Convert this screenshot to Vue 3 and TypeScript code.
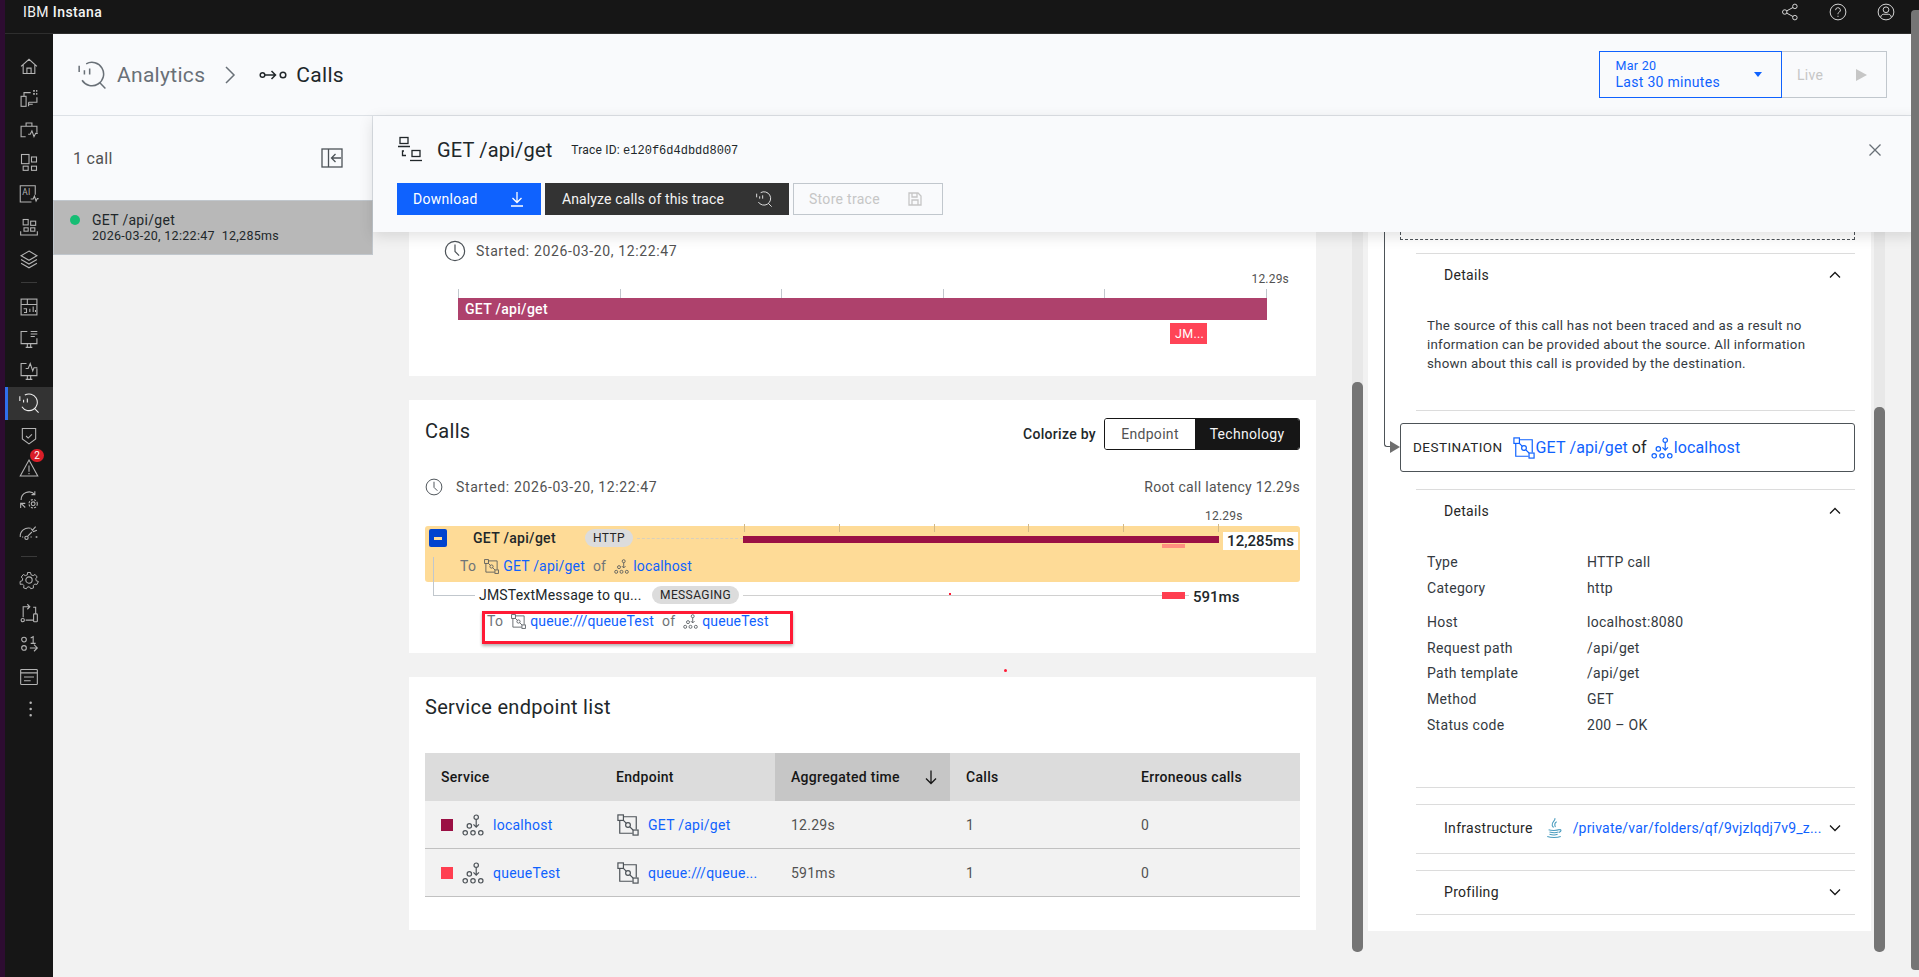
<script setup lang="ts">
interface NavItem { icon: string; badge?: string; active?: boolean }
const navGroups: NavItem[][] = [
  [{ icon: 'home' }, { icon: 'infra' }, { icon: 'case' }, { icon: 'apps' }, { icon: 'ai' }, { icon: 'plat' }, { icon: 'layers' }],
  [{ icon: 'dash' }, { icon: 'mon1' }, { icon: 'mon2' }, { icon: 'analytics', active: true }, { icon: 'shield' }, { icon: 'alert', badge: '2' }, { icon: 'auto' }, { icon: 'gauge' }],
  [{ icon: 'gear' }, { icon: 'flow' }, { icon: 'binary' }, { icon: 'news' }, { icon: 'dots' }],
]
const kvGroups = [
  [['Type', 'HTTP call'], ['Category', 'http']],
  [['Host', 'localhost:8080'], ['Request path', '/api/get'], ['Path template', '/api/get'], ['Method', 'GET'], ['Status code', '200 – OK']],
]
const tableRows = [
  { color: '#9b1044', service: 'localhost', endpoint: 'GET /api/get', time: '12.29s', calls: '1', errors: '0' },
  { color: '#ff3e50', service: 'queueTest', endpoint: 'queue:///queue...', time: '591ms', calls: '1', errors: '0' },
]
const columnHeads = ['Service', 'Endpoint', 'Aggregated time', 'Calls', 'Erroneous calls']
</script>

<template>
  <div class="app">
    <svg class="sprite" width="0" height="0" aria-hidden="true">
      <defs>
        <symbol id="home" viewBox="0 0 24 24"><path d="M2.5 12.5 12 4l9.5 8.5M5 10.5V21h14V10.5M9.5 21v-6.5h5V21" /></symbol>
        <symbol id="infra" viewBox="0 0 24 24"><rect x="2.5" y="10" width="6" height="12" /><path d="M6 10V5.5h8M21.5 11v6H11.5M11.5 22v-5M11.5 19.5h5" /><path class="dotted" d="M17 3.5h5M17 7h5" /></symbol>
        <symbol id="case" viewBox="0 0 24 24"><path d="M8 20H2.5V7.5h19V15M8.5 7.5V3.5h7v4M11 17l2.5 0 2-4 2.5 7 2-4 2.500 0" /></symbol>
        <symbol id="apps" viewBox="0 0 24 24"><rect x="3" y="3" width="9" height="11" /><rect x="15" y="6" width="6" height="6" /><rect x="5" y="17" width="6" height="5" /><rect x="15" y="17" width="6" height="5" /></symbol>
        <symbol id="ai" viewBox="0 0 24 24"><path d="M15 21.5H1.5V2h18v11" /><text x="4" y="13.5" class="svgtxt">AI</text><path d="M14 18h3l1.5-3.5 2 6 1.5-3h1.500" /></symbol>
        <symbol id="plat" viewBox="0 0 24 24"><rect x="5" y="3" width="6" height="6.5" /><rect x="14" y="5" width="6" height="5" /><rect x="6" y="13" width="5" height="4" /><rect x="14" y="13" width="5" height="4" /><path d="M2 17v4.5h20V17" /></symbol>
        <symbol id="layers" viewBox="0 0 24 24"><path d="M12 2.5 21.5 8 12 13.5 2.5 8zM2.5 12.5 12 18l9.5-5.5M2.5 17 12 22.5l9.5-5.5" /></symbol>
        <symbol id="dash" viewBox="0 0 24 24"><rect x="2.5" y="2.5" width="19" height="19" /><path d="M2.5 9h19M10 2.5V9M6 18.5h3v-4.5H5.5M13 18v-4M17 18v-6.5M19.8 18v-2.5" /></symbol>
        <symbol id="mon1" viewBox="0 0 24 24"><path d="M10 3H2.5v14.5h19V11M8 22h8M10 18v4M14 18v4M14 3h8M14 6h8M14 9h5" /></symbol>
        <symbol id="mon2" viewBox="0 0 24 24"><path d="M9 3H2.5v14.5h19V9M8 22h8M10 18v4M14 18v4M8 9h3l2.5-6 3 9 1.5-4 4 0" /></symbol>
        <symbol id="analytics" viewBox="0 0 24 24"><path d="M7 2.5A10 10 0 1 1 3.5 16.5M18.500 18.500 23.500 23.500M1 4v5.500M5.500 8v3.500M10 6.500v5" /></symbol>
        <symbol id="shield" viewBox="0 0 24 24"><path d="M4 3h16v12.5l-8 6-8-6zM8.5 12l2.5 2.500 4.500-4.500" /></symbol>
        <symbol id="alert" viewBox="0 0 24 24"><path d="M12 2.5 22.5 21.5h-21zM12 9v7.500M12 18v1.500" /></symbol>
        <symbol id="auto" viewBox="0 0 24 24"><path d="M2.5 12A9.500 9.500 0 0 1 19 5.500M19 1.500v4h-4M2 21.500V16h5.500M2.500 16l5 5" /><circle cx="17" cy="16.5" r="2.3" /><circle cx="17" cy="16.5" r="5" stroke-dasharray="2.5 1.5" /></symbol>
        <symbol id="gauge" viewBox="0 0 24 24"><path d="M1.5 18A10 10 0 0 1 14 7.500M10.500 17l5-5M16 10l4-4.500M14.500 8l3 3.500 4-1.500" /><circle cx="9" cy="19" r="2" /><path class="dotted" d="M4 18h1M14 18h1M20 18h2" /></symbol>
        <symbol id="gear" viewBox="0 0 24 24"><path d="M10 2h4l.7 3 2.800 1.200 2.600-1.600 2.800 3.400-1.900 2.300.6 2.700 2.900 1v.1l-1.900 3.800-3 -.5-1.900 2.100.4 3-3.700 1.200-1.700-2.500h-2.500l-1.700 2.500-3.700-1.200.4-3-1.900-2.100-3 .5L.1 14l2.900-1 .6-2.700L1.700 8l2.800-3.400 2.600 1.600L9.900 5z" transform="translate(1.2 1.2) scale(.9)" /><circle cx="12" cy="12" r="3.8" /></symbol>
        <symbol id="flow" viewBox="0 0 24 24"><path d="M5 17V4.500h8M10 1.500l3 3-3 3M17 5h3v8M8 20.500h9" /><circle cx="4.5" cy="20.5" r="2" /><rect x="17.5" y="13" width="4.5" height="9.5" rx="1" /></symbol>
        <symbol id="binary" viewBox="0 0 24 24"><circle cx="6" cy="5.5" r="2.8" /><circle cx="6" cy="15.5" r="2.8" /><path d="M14 3.500l3-1.500v8M14 10h6M13 15.500h9M18 11.500l4 4-4 4" /></symbol>
        <symbol id="news" viewBox="0 0 24 24"><rect x="2" y="3" width="20" height="18" rx="1" /><path d="M2 7h20M6 12h12M6 16.500h8" /></symbol>
        <symbol id="dots" viewBox="0 0 24 24"><path class="solid" d="M15.500 4.500a1.500 1.500 0 1 1-3 0 1.500 1.500 0 0 1 3 0zM15.500 12a1.500 1.500 0 1 1-3 0 1.500 1.500 0 0 1 3 0zM15.500 19.500a1.500 1.500 0 1 1-3 0 1.500 1.500 0 0 1 3 0z" /></symbol>
        <symbol id="share" viewBox="0 0 24 24"><circle cx="5" cy="12" r="3" /><circle cx="18.5" cy="4.5" r="3" /><circle cx="18.5" cy="19.5" r="3" /><path d="M7.600 10.500 16 6M7.600 13.500 16 18" /></symbol>
        <symbol id="help" viewBox="0 0 24 24"><circle cx="12" cy="12" r="10.5" /><path d="M8.800 9.500A3.200 3.200 0 1 1 13.500 12.300c-1 .6-1.500 1.100-1.500 2.700M12 17v1.500" /></symbol>
        <symbol id="user" viewBox="0 0 24 24"><circle cx="12" cy="12" r="10.5" /><circle cx="12" cy="9" r="3.8" /><path d="M5 19c0-3 2.500-4 4-4h6c1.500 0 4 1 4 4" /></symbol>
        <symbol id="calls" viewBox="0 0 28 12"><circle cx="3.5" cy="6" r="2.3" /><circle cx="24" cy="6" r="2.8" /><path d="M6 6h10M12.500 2l4 4-4 4" /></symbol>
        <symbol id="panel" viewBox="0 0 24 24"><rect x="2" y="3" width="20" height="18" /><path d="M8.500 3v18M21 12H11.500M15.500 8l-4 4 4 4" /></symbol>
        <symbol id="trace" viewBox="0 0 28 28"><rect x="3" y="1.5" width="8" height="6" /><path d="M1 10.500h12M7 15h-1.500v4.500H9" /><rect x="15" y="14.5" width="8" height="6" /><path d="M13 24.500h12" /></symbol>
        <symbol id="download" viewBox="0 0 16 16"><path d="M8 1v10M3.500 7 8 11.500 12.500 7M2 15h12" /></symbol>
        <symbol id="save" viewBox="0 0 16 16"><path d="M2 2h9l3 3v9H2zM5 2v4h5V2M5 14V9h6v5" /></symbol>
        <symbol id="close" viewBox="0 0 16 16"><path d="M2.500 2.500l11 11M13.500 2.500l-11 11" /></symbol>
        <symbol id="clock" viewBox="0 0 24 24"><circle cx="12" cy="12" r="10.5" /><path d="M12 5v7.500l4.500 4.500" /></symbol>
        <symbol id="endpoint" viewBox="0 0 24 24"><rect x="1" y="1" width="6" height="6" /><rect x="17.5" y="17.5" width="5.5" height="5.5" /><path d="M7 3h14v14M3 7v14h14M7 7l3.200 3.200M14 14l3.500 3.500" /><circle cx="12" cy="12" r="2.6" /></symbol>
        <symbol id="service" viewBox="0 0 24 24"><circle cx="15.5" cy="3.5" r="2.4" /><path d="M15.500 6v8M12.500 11.300l3 3 3-3" /><circle cx="8" cy="13" r="2.4" /><circle cx="3.5" cy="20.5" r="2.4" /><circle cx="12" cy="20.5" r="2.4" /><circle cx="20.5" cy="20.5" r="2.4" /></symbol>
        <symbol id="up" viewBox="0 0 16 16"><path d="M3 10.500 8 5.500l5 5" /></symbol>
        <symbol id="down" viewBox="0 0 16 16"><path d="M3 5.500l5 5 5-5" /></symbol>
        <symbol id="sort" viewBox="0 0 16 16"><path d="M8 1.500v13M3 9.500l5 5 5-5" /></symbol>
        <symbol id="java" viewBox="0 0 20 24"><path d="M11 1c1 3-4 4.500-3 8 .3 1 1 1.500 1.500 2.500M13 5c-3 1.500-2.500 3.500-1.500 6M4 14c3 1 9 1 12-.3M5 16.500c3 .8 8 .8 10-.2M5 19c3 .8 7 .8 9 0M2.500 21.500c4 1.500 11 1.500 15 0M16 14c2-1 3 1.500-.5 3" /></symbol>
      </defs>
    </svg>

    <div class="strip"></div>
    <div class="shell">
      <header class="topbar">
        <span class="brand">IBM <b>Instana</b></span>
        <div class="topicons">
          <svg class="ti"><use href="#share" /></svg>
          <svg class="ti"><use href="#help" /></svg>
          <svg class="ti"><use href="#user" /></svg>
        </div>
      </header>
      <div class="body">
        <nav class="sidenav">
          <template v-for="(group, g) in navGroups" :key="g">
            <div v-if="g > 0" class="navsep"></div>
            <div v-for="item in group" :key="item.icon" class="navitem" :class="{ active: item.active }">
              <svg class="navicon"><use :href="'#' + item.icon" /></svg>
              <span v-if="item.badge" class="badge">{{ item.badge }}</span>
            </div>
          </template>
        </nav>
        <div class="workspace">
          <div class="pagehead">
            <svg class="crumb-icon"><use href="#analytics" /></svg>
            <span class="crumb">Analytics</span>
            <svg class="crumb-sep" viewBox="0 0 12 20"><path d="M2 2l8 8-8 8" /></svg>
            <svg class="calls-icon"><use href="#calls" /></svg>
            <span class="crumb current">Calls</span>
            <div class="timepick">
              <div class="range">
                <div class="range-text"><div class="range-small">Mar 20</div><div>Last 30 minutes</div></div>
                <span class="caret"></span>
              </div>
              <div class="live"><span>Live</span><span class="play"></span></div>
            </div>
          </div>
          <div class="split">
            <aside class="list">
              <div class="listhead">
                <span>1 call</span>
                <svg class="panel-icon"><use href="#panel" /></svg>
              </div>
              <div class="listrow">
                <span class="dot"></span>
                <div><div class="l1">GET /api/get</div><div class="l2">2026-03-20, 12:22:47&nbsp; 12,285ms</div></div>
              </div>
            </aside>
            <section class="detail">
              <div class="dhead">
                <div class="dtitle">
                  <svg class="trace-icon"><use href="#trace" /></svg>
                  <h1>GET /api/get</h1>
                  <span class="traceid">Trace ID: <span class="mono">e120f6d4dbdd8007</span></span>
                  <svg class="close-icon"><use href="#close" /></svg>
                </div>
                <div class="btns">
                  <div class="btn primary"><span>Download</span><svg class="bi"><use href="#download" /></svg></div>
                  <div class="btn dark"><span>Analyze calls of this trace</span><svg class="bi"><use href="#analytics" /></svg></div>
                  <div class="btn off"><span>Store trace</span><svg class="bi"><use href="#save" /></svg></div>
                </div>
              </div>
              <div class="dbody">
                <div class="cards">
                  <div class="card c1">
                    <div class="started s1"><svg class="clock"><use href="#clock" /></svg><span>Started: 2026-03-20, 12:22:47</span></div>
                    <div class="tl">
                      <div class="tl-label">12.29s</div>
                      <div class="tl-ticks"><i v-for="n in 6" :key="n"></i></div>
                      <div class="tl-bar">GET /api/get</div>
                      <div class="tl-child">JM...</div>
                    </div>
                  </div>
                  <div class="card c2">
                    <div class="c2head">
                      <h2>Calls</h2>
                      <div class="colorize">
                        <b>Colorize by</b>
                        <div class="seg"><span class="seg-a">Endpoint</span><span class="seg-b">Technology</span></div>
                      </div>
                    </div>
                    <div class="c2meta">
                      <div class="started"><svg class="clock small"><use href="#clock" /></svg><span>Started: 2026-03-20, 12:22:47</span></div>
                      <span class="latency">Root call latency 12.29s</span>
                    </div>
                    <div class="wf">
                      <div class="wf-label">12.29s</div>
                      <div class="wf-ticks"><i v-for="n in 6" :key="n"></i></div>
                      <div class="wrow yellow">
                        <div class="wleft">
                          <div class="wline">
                            <span class="minus"><i></i></span>
                            <b class="wname">GET /api/get</b>
                            <span class="pill">HTTP</span>
                            <span class="dash"></span>
                          </div>
                          <div class="wlink">
                            <span class="to">To</span>
                            <svg class="mini"><use href="#endpoint" /></svg>
                            <a>GET /api/get</a>
                            <span class="of">of</span>
                            <svg class="mini"><use href="#service" /></svg>
                            <a>localhost</a>
                          </div>
                        </div>
                        <div class="wright">
                          <div class="bar root"></div>
                          <div class="bar ghost"></div>
                          <span class="dur boxed">12,285ms</span>
                        </div>
                      </div>
                      <div class="wrow child">
                        <div class="elbow"></div>
                        <div class="wleft">
                          <div class="wline cline">
                            <span class="cname">JMSTextMessage to qu...</span>
                            <span class="pill">MESSAGING</span>
                          </div>
                          <div class="wlink clink">
                            <span class="to">To</span>
                            <svg class="mini"><use href="#endpoint" /></svg>
                            <a>queue:///queueTest</a>
                            <span class="of">of</span>
                            <svg class="mini"><use href="#service" /></svg>
                            <a>queueTest</a>
                          </div>
                          <div class="redbox"></div>
                        </div>
                        <div class="wright">
                          <div class="rule"></div>
                          <div class="reddot"></div>
                          <div class="bar msg"></div>
                          <span class="dur plain">591ms</span>
                        </div>
                      </div>
                    </div>
                  </div>
                  <div class="stray"></div>
                  <div class="card c3">
                    <h2>Service endpoint list</h2>
                    <div class="table">
                      <div class="th" v-for="(h, i) in columnHeads" :key="h" :class="{ sorted: i === 2 }">
                        <span>{{ h }}</span>
                        <svg v-if="i === 2" class="sort"><use href="#sort" /></svg>
                      </div>
                      <template v-for="r in tableRows" :key="r.service">
                        <div class="td">
                          <span class="swatch" :style="{ background: r.color }"></span>
                          <svg class="tico"><use href="#service" /></svg>
                          <a>{{ r.service }}</a>
                        </div>
                        <div class="td"><svg class="tico first"><use href="#endpoint" /></svg><a>{{ r.endpoint }}</a></div>
                        <div class="td">{{ r.time }}</div>
                        <div class="td">{{ r.calls }}</div>
                        <div class="td">{{ r.errors }}</div>
                      </template>
                    </div>
                  </div>
                </div>
                <div class="track"><div class="thumb t1"></div></div>
                <div class="rpanel">
                  <div class="vline"></div>
                  <div class="varrow"></div>
                  <div class="dashed"></div>
                  <div class="acc a1">
                    <div class="acchead"><span>Details</span><svg class="chev"><use href="#up" /></svg></div>
                    <p class="para">The source of this call has not been traced and as a result no information can be provided about the source. All information shown about this call is provided by the destination.</p>
                  </div>
                  <div class="destbox">
                    <span class="destlabel">DESTINATION</span>
                    <svg class="desticon"><use href="#endpoint" /></svg>
                    <a>GET /api/get</a>
                    <span class="destof">of</span>
                    <svg class="desticon two"><use href="#service" /></svg>
                    <a>localhost</a>
                  </div>
                  <div class="acc a2">
                    <div class="acchead"><span>Details</span><svg class="chev"><use href="#up" /></svg></div>
                    <div class="kvs">
                      <div v-for="(grp, gi) in kvGroups" :key="gi" class="kvgroup">
                        <div v-for="kv in grp" :key="kv[0]" class="kv"><span>{{ kv[0] }}</span><span>{{ kv[1] }}</span></div>
                      </div>
                    </div>
                  </div>
                  <div class="acc a3">
                    <div class="acchead infra">
                      <span>Infrastructure</span>
                      <svg class="java"><use href="#java" /></svg>
                      <a class="infralink">/private/var/folders/qf/9vjzlqdj7v9_z...</a>
                      <svg class="chev"><use href="#down" /></svg>
                    </div>
                  </div>
                  <div class="acc a4">
                    <div class="acchead"><span>Profiling</span><svg class="chev"><use href="#down" /></svg></div>
                  </div>
                </div>
                <div class="track"><div class="thumb t2"></div></div>
              </div>
            </section>
          </div>
        </div>
      </div>
    </div>
    <div class="outerthumb"></div>
  </div>
</template>

<style>
html, body { margin: 0; padding: 0; overflow: hidden; }
</style>

<style scoped>
.app { position: relative; display: flex; width: 1919px; height: 977px; overflow: hidden; background: #f2f2f2; font-family: Roboto, "Liberation Sans", sans-serif; font-size: 14px; letter-spacing: .3px; color: #21272a; }
.sprite { position: absolute; }
svg { fill: none; stroke: currentColor; stroke-width: 1.3; display: block; }
a { color: #0f62fe; }
.solid { fill: currentColor; stroke: none; }
.dotted { stroke-dasharray: 2 1.5; stroke-width: 2; }
.svgtxt { font-size: 10px; fill: currentColor; stroke: none; font-family: Roboto, sans-serif; }
.strip { width: 5px; flex: none; background: #2d0c31; }
.shell { flex: 1; min-width: 0; display: flex; flex-direction: column; }
.topbar { height: 34px; flex: none; background: #161616; border-bottom: 1px solid #2e2e2e; box-sizing: border-box; display: flex; align-items: center; justify-content: space-between; padding: 0 24px 10px 18px; color: #f4f4f4; }
.brand { font-size: 14px; letter-spacing: .4px; }
.brand b { font-weight: 500; }
.topicons { display: flex; gap: 30px; color: #d8d8d8; margin-top: 0; }
.ti { width: 18px; height: 18px; }
.body { flex: 1; display: flex; min-height: 0; }
.sidenav { width: 48px; flex: none; background: #161616; padding-top: 15.5px; color: #b4b4b4; box-sizing: border-box; }
.navitem { position: relative; height: 32.2px; display: flex; align-items: center; justify-content: center; }
.navitem.active { background: #333; box-shadow: inset 3px 0 0 #2f6fed; color: #eee; }
.navicon { width: 20px; height: 20px; }
.navsep { height: 1px; width: 16px; margin: 7.5px auto; background: #3a3a3a; }
.badge { position: absolute; top: -3px; left: 25px; width: 14px; height: 13px; border-radius: 7px; background: #da1e28; color: #fff; font-size: 10px; line-height: 13px; text-align: center; letter-spacing: 0; }
.workspace { flex: 1; min-width: 0; display: flex; flex-direction: column; }
.pagehead { height: 82px; flex: none; box-sizing: border-box; background: #f9fafc; border-bottom: 1px solid #dde1e6; display: flex; align-items: center; padding: 0 32px 0 25px; }
.crumb-icon { width: 28px; height: 28px; color: #697077; margin-right: 11px; }
.crumb { font-size: 21px; color: #697077; letter-spacing: .3px; }
.crumb.current { color: #21272a; }
.crumb-sep { width: 12px; height: 20px; color: #697077; margin: 0 23px 0 19px; stroke-width: 1.5; }
.calls-icon { width: 28px; height: 12px; color: #21272a; margin-right: 9px; stroke-width: 1.5; }
.timepick { margin-left: auto; display: flex; height: 47px; }
.range { width: 183px; box-sizing: border-box; border: 1.5px solid #0f62fe; color: #0f62fe; display: flex; align-items: center; justify-content: space-between; padding: 0 19px 0 15.5px; line-height: 17px; }
.range-text { margin-top: -2px; }
.range-small { font-size: 12.5px; }
.caret { width: 0; height: 0; border: 4.5px solid transparent; border-top: 5px solid #0f62fe; border-bottom: 0; }
.live { width: 105px; box-sizing: border-box; border: 1px solid #c1c7cd; border-left: 0; display: flex; align-items: center; justify-content: space-between; padding: 0 19px 0 15px; color: #c6c6c6; }
.play { width: 0; height: 0; border-left: 11px solid #c6c6c6; border-top: 6px solid transparent; border-bottom: 6px solid transparent; }
.split { flex: 1; display: flex; min-height: 0; }
.list { width: 320px; flex: none; }
.listhead { height: 84px; box-sizing: border-box; background: #f9fafc; display: flex; align-items: center; justify-content: space-between; padding: 0 28px 0 20px; border-right: 1px solid #dde1e6; font-size: 16px; color: #525252; }
.panel-icon { width: 24px; height: 24px; color: #4d5358; }
.listrow { height: 55px; box-sizing: border-box; background: #b8b8b8; border: 1px solid #c1c7cd; display: flex; align-items: center; padding-left: 16px; gap: 12px; font-size: 12.5px; line-height: 15px; color: #21272a; }
.listrow .l1 { font-size: 14px; }
.dot { width: 10px; height: 10px; border-radius: 50%; background: #16bd74; margin-top: -16px; }
.detail { flex: 1; min-width: 0; display: flex; flex-direction: column; }
.dhead { position: relative; z-index: 2; height: 116px; flex: none; box-sizing: border-box; background: #f9fafc; box-shadow: 0 4px 14px rgba(0, 0, 0, .12); padding: 18px 36px 0 24px; }
.dtitle { display: flex; align-items: center; height: 32px; }
.trace-icon { width: 28px; height: 28px; margin-right: 12px; color: #21272a; }
h1 { font-size: 20px; font-weight: 400; margin: 0 19px 0 0; letter-spacing: .15px; }
.traceid { font-size: 12px; letter-spacing: .2px; color: #21272a; }
.mono { font-family: "Liberation Mono", monospace; letter-spacing: 0; }
.close-icon { width: 16px; height: 16px; margin-left: auto; color: #697077; }
.btns { display: flex; gap: 4px; margin-top: 17px; }
.btn { height: 32px; box-sizing: border-box; display: flex; align-items: center; justify-content: space-between; }
.bi { width: 16px; height: 16px; }
.primary { width: 144px; background: #0f62fe; color: #fff; padding: 0 16px; }
.dark { width: 244px; background: #333; color: #f4f4f4; padding: 0 17px; letter-spacing: .12px; }
.off { width: 150px; border: 1px solid #c1c7cd; color: #c6c6c6; padding: 0 19px 0 15px; }
.dbody { flex: 1; display: flex; min-height: 0; padding-left: 36px; }
.cards { position: relative; width: 907px; flex: none; margin-right: 36px; display: flex; flex-direction: column; gap: 24px; }
.card { background: #fff; box-sizing: border-box; flex: none; }
.c1 { height: 144px; padding: 0 35px; }
.started { display: flex; align-items: center; gap: 10px; color: #525252; letter-spacing: .62px; }
.started.s1 { padding-top: 8px; height: 22px; box-sizing: content-box; }
.clock { width: 22px; height: 22px; color: #4d5358; }
.clock.small { width: 18px; height: 18px; margin-right: 3px; }
.tl { position: relative; margin: 27px 0 0 14px; width: 809px; }
.tl-label { position: absolute; top: -17px; right: -22px; font-size: 12px; color: #525252; letter-spacing: .2px; }
.tl-ticks { display: flex; justify-content: space-between; height: 9px; }
.tl-ticks i, .wf-ticks i { width: 1px; background: #c1c7cd; display: block; }
.tl-bar { height: 22px; background: #ae416c; color: #fff; font-weight: 500; line-height: 22px; padding-left: 7px; }
.tl-child { margin: 3px 0 0 712px; width: 37px; height: 21px; background: #ff4457; color: #fff; font-size: 12.5px; line-height: 21px; padding-left: 5px; box-sizing: border-box; }
.c2 { height: 253px; padding: 0 16px; }
h2 { font-size: 20px; font-weight: 400; margin: 0; color: #21272a; }
.c2head { display: flex; justify-content: space-between; align-items: center; padding-top: 18px; height: 32px; }
.c2head h2 { margin-top: -6px; }
.colorize { display: flex; align-items: center; gap: 8px; }
.colorize b { font-weight: 500; color: #21272a; font-size: 14px; }
.seg { display: flex; height: 32px; width: 196px; box-sizing: border-box; border: 1px solid #161616; border-radius: 3px; overflow: hidden; }
.seg span { display: flex; align-items: center; justify-content: center; }
.seg-a { width: 90px; background: #fff; color: #525252; }
.seg-b { flex: 1; background: #161616; color: #f4f4f4; }
.c2meta { display: flex; justify-content: space-between; align-items: center; margin-top: 27px; height: 20px; color: #525252; }
.wf { position: relative; margin-top: 29px; }
.wf-label { position: absolute; top: -17px; left: 780px; font-size: 12px; color: #525252; letter-spacing: .2px; }
.wf-ticks { position: absolute; z-index: 1; left: 319px; top: -2px; width: 475px; height: 8px; display: flex; justify-content: space-between; }
.wf-ticks i { background: #d3b987; }
.wrow { display: flex; position: relative; }
.yellow { height: 56px; background: #fedb97; border-radius: 3px; }
.child { height: 72px; }
.wleft { width: 318px; flex: none; position: relative; }
.wright { flex: 1; position: relative; }
.wline { display: flex; align-items: center; height: 26px; padding-left: 4px; margin-top: -1px; }
.minus { width: 18px; height: 18px; border-radius: 2px; background: #0043ce; display: flex; align-items: center; justify-content: center; margin-right: 26px; }
.minus i { width: 8px; height: 3px; background: #fedb97; display: block; }
.wname { font-weight: 500; width: 112px; flex: none; }
.pill { height: 18px; line-height: 18px; padding: 0 8px; border-radius: 9px; background: #dcdcdc; font-size: 12px; color: #262626; letter-spacing: .4px; flex: none; }
.dash { flex: 1; margin: 0 0 0 4px; border-top: 1px dashed #d8d0bd; }
.wlink { display: flex; align-items: center; padding-left: 35px; height: 26px; margin-top: 2px; white-space: nowrap; letter-spacing: .18px; }
.to { color: #6f7478; margin-right: 8px; letter-spacing: .3px; }
.of { color: #6f7478; margin: 0 8px; }
.mini { width: 15px; height: 15px; color: #4d5358; margin-right: 4px; flex: none; }
.elbow { position: absolute; left: 8px; top: -25px; width: 42px; height: 39px; box-sizing: border-box; border-left: 1px solid #c1c7cd; border-bottom: 1px solid #c1c7cd; z-index: 1; }
.cline { padding-left: 54px; height: 28px; letter-spacing: .2px; }
.cname { width: 173px; flex: none; }
.clink { padding-left: 62px; margin-top: 0; height: 24px; letter-spacing: .15px; }
.redbox { position: absolute; left: 57px; top: 29px; width: 311px; height: 33px; box-sizing: border-box; border: 3px solid #ff1a35; box-shadow: 0 2px 3px rgba(0, 0, 0, .3); }
.bar { position: absolute; left: 0; }
.root { top: 10px; width: 476px; height: 7px; background: #9b1044; }
.ghost { left: 419px; top: 18px; width: 23px; height: 4px; background: #ff8f7f; }
.dur { position: absolute; font-weight: 500; font-size: 15px; }
.boxed { left: 480px; top: 6px; width: 75px; height: 18px; line-height: 18px; background: #fff; text-align: center; letter-spacing: 0; }
.rule { position: absolute; left: 0; top: 13px; width: 446px; height: 1px; background: #d0d0d0; }
.reddot { position: absolute; left: 206px; top: 11px; width: 2px; height: 2px; background: #ff1a35; }
.msg { left: 419px; top: 10px; width: 23px; height: 7px; background: #ff3e50; }
.plain { left: 450px; top: 6px; letter-spacing: 0; }
.stray { position: absolute; left: 595px; top: 437px; width: 3px; height: 3px; border-radius: 50%; background: #ff1a35; }
.c3 { height: 253px; padding: 19px 16px 0; }
.c3 h2 { line-height: 22px; }
.table { display: grid; grid-template-columns: repeat(5, 175px); margin-top: 35px; }
.th { height: 48px; background: #dcdcdc; padding: 0 16px; display: flex; align-items: center; justify-content: space-between; font-weight: 500; color: #161616; }
.th.sorted { background: #c6c6c6; }
.sort { width: 16px; height: 16px; margin-right: -5px; }
.td { height: 48px; box-sizing: border-box; background: #f2f2f2; border-bottom: 1px solid #c1c1c1; padding: 0 16px; display: flex; align-items: center; color: #525252; overflow: hidden; white-space: nowrap; letter-spacing: .25px; }
.swatch { width: 12px; height: 12px; flex: none; margin-right: 9px; }
.tico { width: 22px; height: 22px; flex: none; color: #4d5358; margin-right: 9px; }
.tico.first { margin-left: 1px; }
.track { width: 11px; height: 720px; flex: none; background: #e8e8e8; border-radius: 0 0 5px 5px; }
.thumb { background: #757575; border-radius: 5px; }
.t1 { margin-top: 150px; height: 570px; }
.t2 { margin-top: 175px; height: 545px; }
.rpanel { position: relative; width: 503px; height: 699px; flex: none; margin: 0 3px 0 5px; background: #fff; box-sizing: border-box; padding: 0 16px 0 32px; }
.vline { position: absolute; left: 16px; top: 0; width: 6px; height: 215px; box-sizing: border-box; border-left: 1px solid #4d5358; border-bottom: 1px solid #4d5358; border-radius: 0 0 0 3px; }
.varrow { position: absolute; left: 22px; top: 209px; width: 0; height: 0; border-left: 10px solid #6f6f6f; border-top: 6px solid transparent; border-bottom: 6px solid transparent; }
.dashed { height: 8px; box-sizing: border-box; border: 1px dashed #4d5358; border-top: 0; }
.acc { margin-left: 16px; box-sizing: border-box; border-top: 1px solid #dcdcdc; border-bottom: 1px solid #dcdcdc; }
.a1 { margin-top: 13px; height: 158px; }
.a2 { height: 299px; }
.a3 { margin-top: 16px; height: 50px; }
.a4 { margin-top: 16px; height: 45px; }
.acchead { height: 42px; display: flex; align-items: center; justify-content: space-between; padding: 0 12px 0 28px; color: #262626; }
.a2 .acchead { height: 41px; }
.a3 .acchead { height: 46px; }
.chev { width: 16px; height: 16px; color: #161616; flex: none; }
.para { margin: 20px 20px 0 11px; font-size: 13.3px; line-height: 19px; color: #343a3f; letter-spacing: .26px; }
.destbox { margin: 12px 0 17px; height: 49px; box-sizing: border-box; border: 1px solid #4d5358; border-radius: 3px; display: flex; align-items: center; padding-left: 12px; font-size: 16px; letter-spacing: .12px; }
.destlabel { font-size: 13.5px; color: #262626; margin-right: 10px; letter-spacing: .45px; margin-top: -2px; }
.desticon { width: 22px; height: 24px; color: #0f62fe; margin-right: 1px; }
.destof { margin: 0 4px; color: #262626; }
.desticon.two { margin-right: 1px; }
.kvs { padding: 18px 0 0 11px; }
.kvgroup { margin-bottom: 8.6px; }
.kv { display: flex; height: 25.7px; align-items: center; color: #343a3f; }
.kv span:first-child { width: 160px; }
.infra { justify-content: flex-start; }
.java { width: 18px; height: 22px; color: #4a9cbf; margin: 0 10px 0 12px; stroke-width: 1.2; flex: none; }
.infralink { flex: 1; white-space: nowrap; overflow: hidden; letter-spacing: .2px; }
.outerthumb { position: absolute; right: 0; top: 10px; width: 8px; height: 960px; background: #757575; border-radius: 4px 0 0 4px; z-index: 3; }
</style>
